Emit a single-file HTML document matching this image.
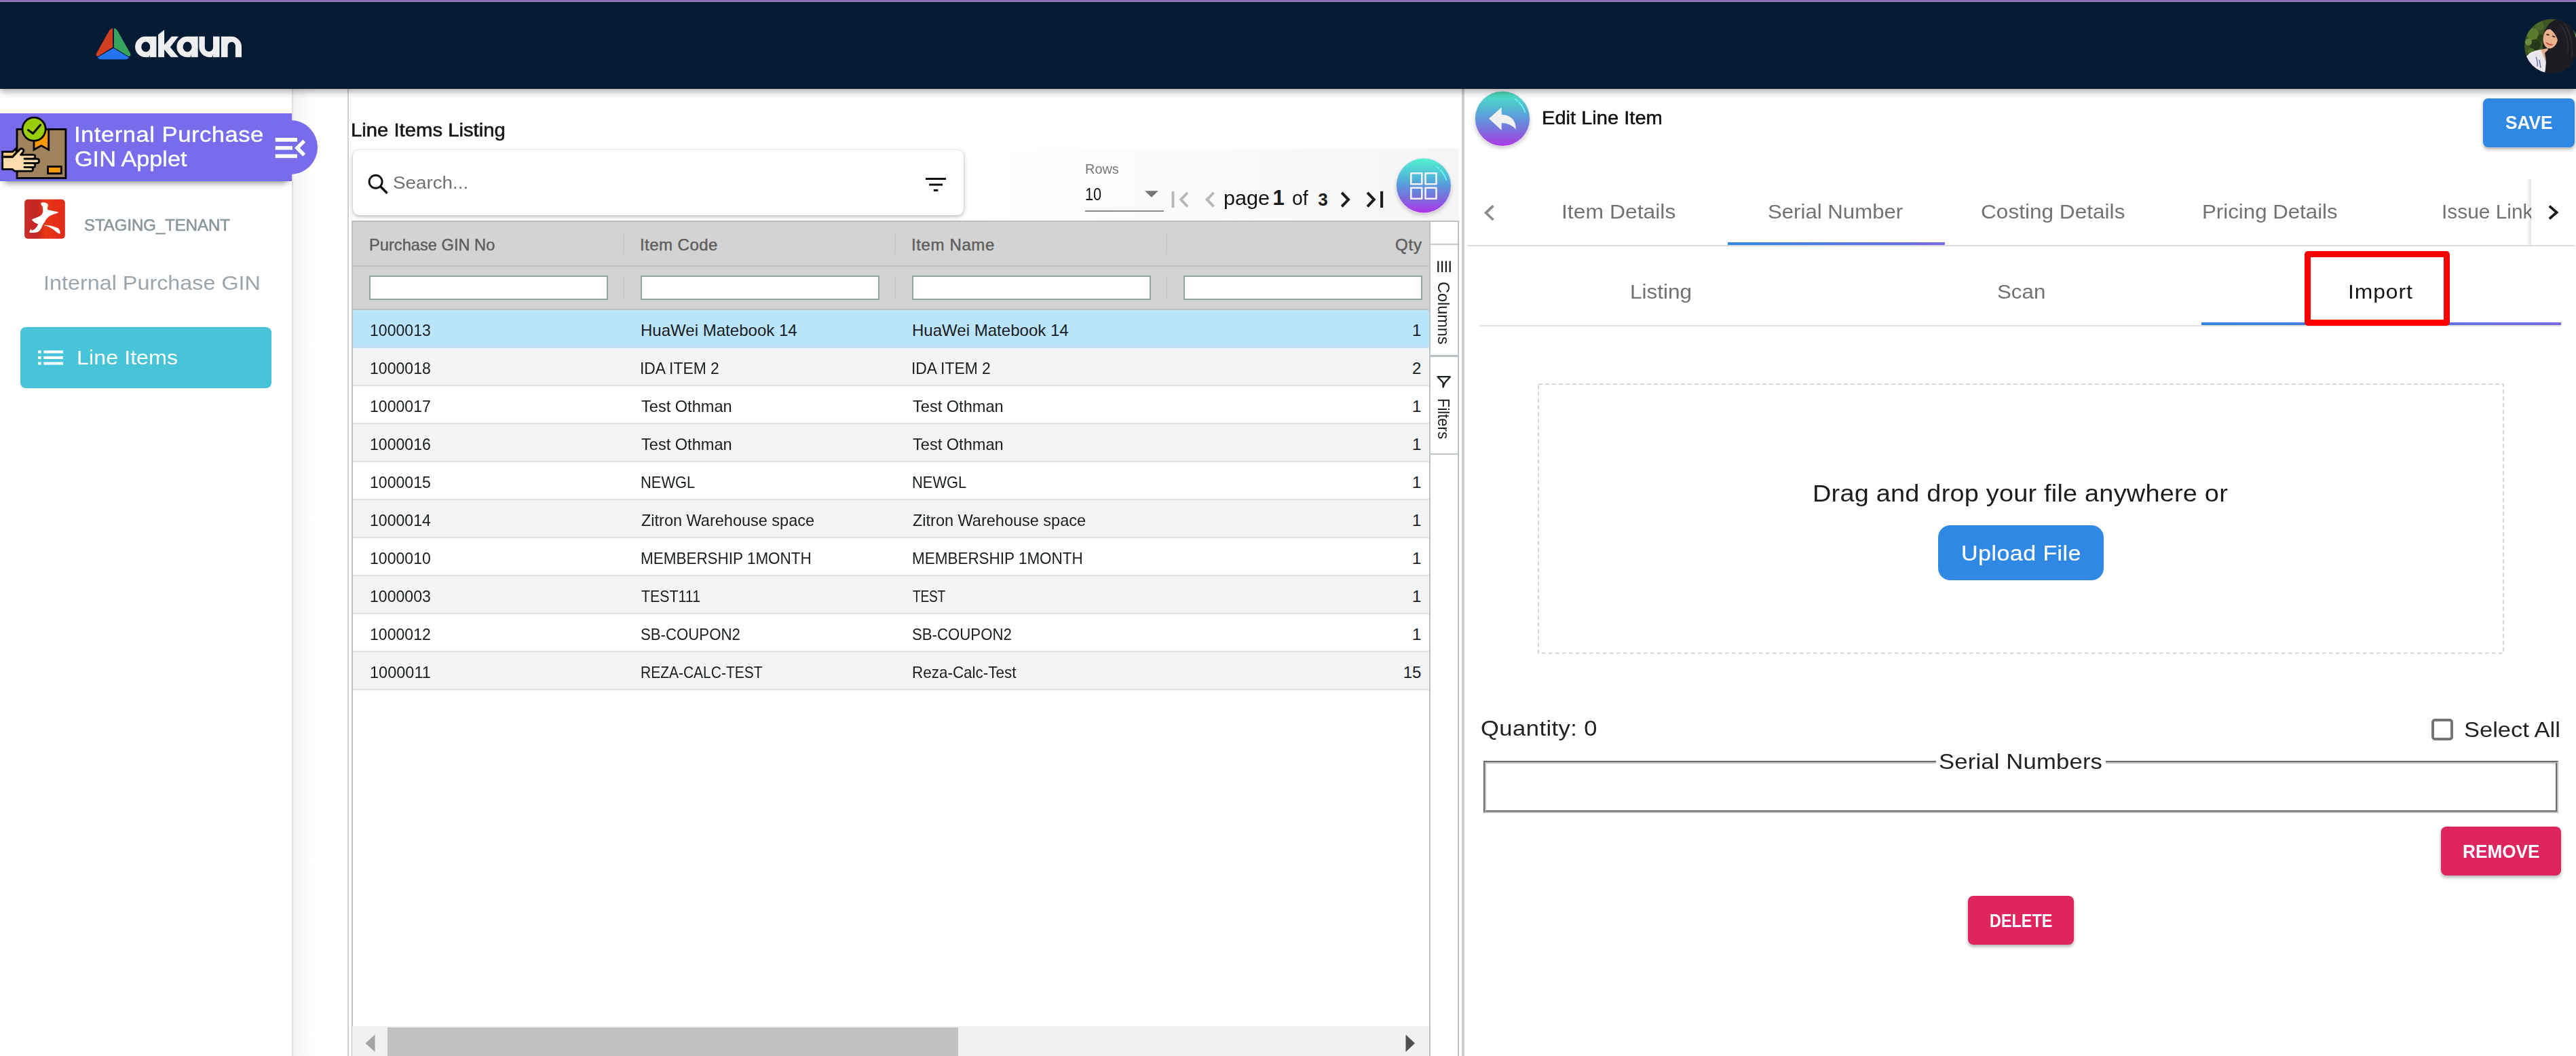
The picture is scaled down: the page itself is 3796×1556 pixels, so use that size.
<!DOCTYPE html>
<html><head><meta charset="utf-8"><title>akaun</title><style>
*{box-sizing:border-box;margin:0;padding:0}
html,body{width:3796px;height:1556px;overflow:hidden;background:#fff;font-family:"Liberation Sans",sans-serif}
.a{position:absolute}
.t{position:absolute;white-space:pre;font-family:"Liberation Sans",sans-serif}
</style></head><body>
<div class="a" style="left:0;top:0;width:3796px;height:3px;background:linear-gradient(#8c6fb8 0,#8c6fb8 66%,#9a78c2 67%);z-index:31"></div>
<div class="a" style="left:0;top:3px;width:3796px;height:128px;background:#051b34;box-shadow:0 4px 10px rgba(0,0,0,.35);z-index:30"></div>
<svg class="a" style="left:140px;top:40px;z-index:32" width="56" height="50" viewBox="0 0 56 50">
<path d="M26.1 1.8 V29.5 L4.6 43 Q0.6 43 2 38.8 L20.3 6.2 Q23 2 26.1 1.8 Z" fill="#d04020"/>
<path d="M28 1.8 Q31 2 33.7 6.2 L52 38.8 Q53.4 43 49.4 43 L28 30.1 Z" fill="#38a55e"/>
<path d="M27.1 31 L50 44.5 Q49 47.2 45.5 47.4 H8.5 Q5 47.2 3.7 44.5 Z" fill="#2775ee"/>
</svg>
<svg class="a" style="left:196px;top:40px;z-index:32" width="166" height="50" viewBox="0 0 166 50"><g fill="#efefef" fill-rule="evenodd">
<path d="M18.3 13.8 H34.5 V44.2 H18.3 A15.2 15.2 0 0 1 18.3 13.8 Z M18.8 21.5 A6.5 7.5 0 1 0 18.8 36.5 A6.5 7.5 0 1 0 18.8 21.5 Z"/>
<path d="M37.1 11 L46.1 4 V26 L56.9 13.8 H67 L54.8 29.4 L67 44.2 H55.8 L46.1 33 V44.2 H37.1 Z"/>
<path d="M79.6 13.8 H95.7 V44.2 H79.6 A15.2 15.2 0 0 1 79.6 13.8 Z M80.1 21.5 A6.5 7.5 0 1 0 80.1 36.5 A6.5 7.5 0 1 0 80.1 21.5 Z"/>
<path d="M97.4 13.8 H105.8 V30 A6.1 6.1 0 0 0 118 30 V13.8 H127.5 V44.2 H112.6 A15.2 15.2 0 0 1 97.4 29 Z"/>
<path d="M129.9 13.8 H144.8 A15.2 15.2 0 0 1 160 29 V44.2 H150.9 V27.4 A5.65 5.65 0 0 0 139.6 27.4 V44.2 H129.9 Z"/>
</g><g fill="#051b34"><path d="M24.7 44.4 V41.2 L22.9 44.4 Z"/><path d="M85.9 44.4 V41.2 L84.1 44.4 Z"/><path d="M118 44.4 V41.2 L116.2 44.4 Z"/></g></svg>
<svg class="a" style="left:3720px;top:28px;z-index:32" width="76" height="80" viewBox="0 0 76 80">
<defs><clipPath id="av"><circle cx="40" cy="40" r="40"/></clipPath><filter id="avb" x="-10%" y="-10%" width="120%" height="120%"><feGaussianBlur stdDeviation="0.7"/></filter></defs>
<g clip-path="url(#av)"><g filter="url(#avb)">
<rect x="-4" y="-4" width="88" height="88" fill="#3c5523"/>
<circle cx="12" cy="22" r="9" fill="#5a7a2e"/><circle cx="22" cy="10" r="7" fill="#4d6b2a"/><circle cx="16" cy="38" r="8" fill="#27391a"/><circle cx="6" cy="34" r="5" fill="#6b8c3c"/><circle cx="24" cy="28" r="5" fill="#2b4019"/><circle cx="10" cy="48" r="5" fill="#4a6a28"/>
<circle cx="72" cy="16" r="7" fill="#6f9740"/><circle cx="76" cy="26" r="5" fill="#83ac52"/>
<path d="M27 34 Q28 8 46 1 Q62 0 70 12 Q78 26 78 48 L80 84 L26 84 Q32 64 27 50 Z" fill="#1d1e22"/>
<path d="M3 55 Q9 47 24 45 L33 45 L31 84 L12 84 Q5 70 3 55Z" fill="#ebe7ef"/>
<path d="M24 45 L35 43 L31 62 Z" fill="#e2ad8c"/>
<path d="M17 56 Q20 62 19 70 M22 60 L24 72" stroke="#5a6aa0" stroke-width="1.4" fill="none"/>
<ellipse cx="38.5" cy="28" rx="10.8" ry="15.6" fill="#e8b18c" transform="rotate(10 38.5 28)"/>
<path d="M28 20 Q34 8 48 10 Q52 20 50 34 Q46 20 38 15 Q32 15 28 20Z" fill="#1d1e22"/>
<path d="M32.5 22.6 L36.5 23.6 M41 25 L45 26.4" stroke="#2a1c18" stroke-width="1.6" fill="none"/>
<path d="M31.5 34.5 Q35.5 39.5 41.5 38 Q36 37.6 31.5 34.5Z" fill="#c8434c" stroke="#c8434c" stroke-width="1"/>
<path d="M30 50 Q40 40 53 44 Q64 60 58 84 L29 84 Q34 66 30 50Z" fill="#1d1e22"/>
<path d="M52 8 Q66 22 64 50 M58 6 Q72 24 70 56" stroke="#33343a" stroke-width="1.2" fill="none"/>
</g></g></svg>
<div class="a" style="left:0;top:131px;width:432px;height:1425px;background:#fff;border-right:2px solid #e0e0e0"></div>
<div class="a" style="left:432px;top:131px;width:30px;height:1425px;background:linear-gradient(90deg,#f3f3f3,#fff)"></div>
<div class="a" style="left:388px;top:176.8px;width:80px;height:80px;border-radius:40px;background:#796cec;z-index:6"></div>
<div class="a" style="left:0;top:167px;width:430px;height:100px;background:#796cec;box-shadow:0 9px 9px -7px rgba(0,0,0,.5);z-index:5"></div>
<span class="t" style="left:109.4px;top:183.0px;font-size:31.5px;line-height:31.5px;font-weight:400;color:#fff;letter-spacing:0.44px;transform:scaleX(1.1000);transform-origin:0 0;-webkit-text-stroke:0.35px #fff;z-index:7">Internal Purchase</span>
<span class="t" style="left:109.9px;top:219.1px;font-size:31.5px;line-height:31.5px;font-weight:400;color:#fff;transform:scaleX(1.0866);transform-origin:0 0;-webkit-text-stroke:0.35px #fff;z-index:7">GIN Applet</span>
<svg class="a" style="left:400px;top:196px;z-index:8" width="56" height="44" viewBox="0 0 56 44" fill="none" stroke="#fff">
<path d="M5.75 9.9H38M5.75 22H31M5.75 34.05H38" stroke-width="5.6"/><path d="M48.3 11.6 L37.9 22 L48.3 32.5" stroke-width="5.4"/></svg>
<span class="t" style="left:123.5px;top:319.8px;font-size:24px;line-height:24px;font-weight:400;color:#8a969c;transform:scaleX(0.9971);transform-origin:0 0;-webkit-text-stroke:0.6px #8a969c;">STAGING_TENANT</span>
<span class="t" style="left:64.4px;top:401.9px;font-size:30px;line-height:30px;font-weight:400;color:#9ba5ab;transform:scaleX(1.0780);transform-origin:0 0;">Internal Purchase GIN</span>
<div class="a" style="left:30px;top:482px;width:370px;height:90px;border-radius:8px;background:#48c4d9"></div>
<svg class="a" style="left:55px;top:515px" width="40" height="24" viewBox="0 0 40 24" fill="#fff">
<rect x="1" y="1.5" width="4.5" height="4"/><rect x="9.5" y="1.5" width="28.5" height="4"/>
<rect x="1" y="10" width="4.5" height="4"/><rect x="9.5" y="10" width="28.5" height="4"/>
<rect x="1" y="18.5" width="4.5" height="4"/><rect x="9.5" y="18.5" width="28.5" height="4"/></svg>
<span class="t" style="left:112.8px;top:511.8px;font-size:30px;line-height:30px;font-weight:400;color:#fff;transform:scaleX(1.0783);transform-origin:0 0;">Line Items</span>
<div class="a" style="left:512px;top:131px;width:2px;height:1425px;background:#d0d0d0"></div>
<span class="t" style="left:517.3px;top:179.1px;font-size:27px;line-height:27px;font-weight:400;color:#151515;transform:scaleX(1.0841);transform-origin:0 0;-webkit-text-stroke:0.55px #151515;">Line Items Listing</span>
<div class="a" style="left:1430px;top:219px;width:720px;height:106px;background:linear-gradient(90deg,#fff 0,#f5f5f5 100%)"></div>
<div class="a" style="left:519.5px;top:221px;width:900px;height:95.5px;border-radius:9px;background:#fff;box-shadow:0 2px 6px rgba(0,0,0,.28),0 0 2px rgba(0,0,0,.12)"></div>
<svg class="a" style="left:540px;top:255px" width="36" height="36" viewBox="0 0 36 36" fill="none" stroke="#111" stroke-width="2.9"><circle cx="13.6" cy="12.7" r="9.5"/><path d="M20.4 19.6 L30.6 29.7" stroke-width="3.5"/></svg>
<span class="t" style="left:578.5px;top:256.4px;font-size:26.5px;line-height:26.5px;font-weight:400;color:#707070;transform:scaleX(1.0488);transform-origin:0 0;">Search...</span>
<svg class="a" style="left:1362px;top:258px" width="36" height="28" viewBox="0 0 36 28" fill="#111"><rect x="2" y="4" width="30" height="3"/><rect x="7.1" y="12.6" width="19.9" height="3"/><rect x="13.8" y="20.9" width="6.5" height="3.1"/></svg>
<span class="t" style="left:1598.9px;top:238.9px;font-size:20px;line-height:20px;font-weight:400;color:#777;transform:scaleX(0.9957);transform-origin:0 0;">Rows</span>
<span class="t" style="left:1598.6px;top:272.7px;font-size:26.5px;line-height:26.5px;font-weight:400;color:#111;transform:scaleX(0.8191);transform-origin:0 0;">10</span>
<svg class="a" style="left:1686px;top:280px" width="22" height="12" viewBox="0 0 22 12"><path d="M1 1.2 H20.8 L10.9 10.8 Z" fill="#757575"/></svg>
<div class="a" style="left:1599px;top:310px;width:116px;height:2px;background:#8a8a8a"></div>
<svg class="a" style="left:1720px;top:276px" width="330" height="36" viewBox="0 0 330 36" fill="none" stroke-width="4">
<path d="M8.5 6.1V30" stroke="#b8b8b8" stroke-width="3.9"/><path d="M30 7.9 L20.2 18.1 L30 28.3" stroke="#b8b8b8"/>
<path d="M68.5 7.9 L58.7 18.1 L68.5 28.3" stroke="#b8b8b8"/>
<path d="M257.2 7.9 L267 18.1 L257.2 28.3" stroke="#1c1c1c"/>
<path d="M295 7.9 L304.8 18.1 L295 28.3" stroke="#1c1c1c"/><path d="M316.1 5.8V30" stroke="#1c1c1c" stroke-width="4.1"/>
</svg>
<span class="t" style="left:1803.1px;top:277.1px;font-size:30px;line-height:30px;font-weight:400;color:#111;transform:scaleX(1.0207);transform-origin:0 0;">page</span>
<span class="t" style="left:1875.5px;top:276.3px;font-size:31px;line-height:31px;font-weight:700;color:#1c1c1c;">1</span>
<span class="t" style="left:1903.6px;top:277.1px;font-size:30px;line-height:30px;font-weight:400;color:#111;transform:scaleX(0.9439);transform-origin:0 0;">of</span>
<span class="t" style="left:1942.3px;top:280.7px;font-size:26px;line-height:26px;font-weight:700;color:#1c1c1c;">3</span>
<svg class="a" style="left:2050px;top:226px" width="96" height="100" viewBox="0 0 96 100">
<defs><linearGradient id="gb" x1="0" y1="0" x2="0" y2="1"><stop offset="0" stop-color="#52f2d0"/><stop offset=".3" stop-color="#50c2d8"/><stop offset=".5" stop-color="#5a98dc"/><stop offset=".72" stop-color="#7a6edc"/><stop offset="1" stop-color="#ac36e6"/></linearGradient>
<filter id="sh" x="-30%" y="-30%" width="160%" height="170%"><feGaussianBlur stdDeviation="3"/></filter></defs>
<ellipse cx="48" cy="51.5" rx="39.5" ry="38.5" fill="rgba(0,0,0,.26)" filter="url(#sh)"/>
<circle cx="47.9" cy="47.5" r="41" fill="#ece2f2"/><circle cx="47.9" cy="47.5" r="40.1" fill="url(#gb)"/>
<path d="M67 19.6 L70.4 22.4 M72.6 24.6 Q78.6 31 81.6 39.2" stroke="#74f2ee" stroke-width="1.7" fill="none" stroke-linecap="round"/>
<g fill="none" stroke="#f5f3f7" stroke-width="2.6" stroke-linejoin="round"><rect x="29.3" y="29.3" width="16" height="16"/><rect x="50.5" y="29.3" width="16" height="16"/><rect x="29.3" y="50.7" width="16" height="16"/><rect x="50.5" y="50.7" width="16" height="16"/></g>
</svg>
<div class="a" style="left:518px;top:325px;width:1589px;height:132px;background:#d3d3d3;border-top:2px solid #b9c0c4"></div>
<div class="a" style="left:518px;top:391px;width:1589px;height:2px;background:#bcc3c7"></div>
<div class="a" style="left:518px;top:455px;width:1589px;height:2px;background:#bcc3c7"></div>
<div class="a" style="left:518px;top:325px;width:2px;height:1231px;background:#bcc3c7"></div>
<div class="a" style="left:2106px;top:325px;width:2px;height:1231px;background:#bcc3c7"></div>
<div class="a" style="left:918px;top:343px;width:2px;height:32px;background:#c4c9cc"></div>
<div class="a" style="left:918px;top:408px;width:2px;height:32px;background:#c4c9cc"></div>
<div class="a" style="left:1318px;top:343px;width:2px;height:32px;background:#c4c9cc"></div>
<div class="a" style="left:1318px;top:408px;width:2px;height:32px;background:#c4c9cc"></div>
<div class="a" style="left:1718px;top:343px;width:2px;height:32px;background:#c4c9cc"></div>
<div class="a" style="left:1718px;top:408px;width:2px;height:32px;background:#c4c9cc"></div>
<span class="t" style="left:544.0px;top:349.1px;font-size:24px;line-height:24px;font-weight:400;color:#5f5f5f;transform:scaleX(0.9854);transform-origin:0 0;-webkit-text-stroke:0.5px #5f5f5f;">Purchase GIN No</span>
<span class="t" style="left:943.0px;top:349.1px;font-size:24px;line-height:24px;font-weight:400;color:#5f5f5f;letter-spacing:0.45px;-webkit-text-stroke:0.5px #5f5f5f;">Item Code</span>
<span class="t" style="left:1343.0px;top:349.1px;font-size:24px;line-height:24px;font-weight:400;color:#5f5f5f;letter-spacing:0.62px;-webkit-text-stroke:0.5px #5f5f5f;">Item Name</span>
<span class="t" style="left:2056.0px;top:349.1px;font-size:24px;line-height:24px;font-weight:400;color:#5f5f5f;letter-spacing:0.83px;-webkit-text-stroke:0.5px #5f5f5f;">Qty</span>
<div class="a" style="left:544px;top:406px;width:352px;height:36px;background:#fff;border:2px solid #95a5a6"></div>
<div class="a" style="left:944px;top:406px;width:352px;height:36px;background:#fff;border:2px solid #95a5a6"></div>
<div class="a" style="left:1344px;top:406px;width:352px;height:36px;background:#fff;border:2px solid #95a5a6"></div>
<div class="a" style="left:1744px;top:406px;width:352px;height:36px;background:#fff;border:2px solid #95a5a6"></div>
<div class="a" style="left:520px;top:457px;width:1586px;height:56px;background:#bbe4fd;border-bottom:2px solid #c9dfee"></div>
<span class="t" style="left:544.5px;top:474.5px;font-size:24px;line-height:24px;font-weight:400;color:#181d1f;transform:scaleX(0.9611);transform-origin:0 0;">1000013</span>
<span class="t" style="left:944.0px;top:474.5px;font-size:24px;line-height:24px;font-weight:400;color:#181d1f;letter-spacing:0.02px;">HuaWei Matebook 14</span>
<span class="t" style="left:1344.0px;top:474.5px;font-size:24px;line-height:24px;font-weight:400;color:#181d1f;letter-spacing:0.02px;">HuaWei Matebook 14</span>
<span class="t" style="left:2081.0px;top:474.5px;font-size:24px;line-height:24px;font-weight:400;color:#181d1f;">1</span>
<div class="a" style="left:520px;top:513px;width:1586px;height:56px;background:#f4f4f4;border-bottom:2px solid #dde2e6"></div>
<span class="t" style="left:544.5px;top:530.5px;font-size:24px;line-height:24px;font-weight:400;color:#181d1f;transform:scaleX(0.9611);transform-origin:0 0;">1000018</span>
<span class="t" style="left:943.1px;top:530.5px;font-size:24px;line-height:24px;font-weight:400;color:#181d1f;transform:scaleX(0.9509);transform-origin:0 0;">IDA ITEM 2</span>
<span class="t" style="left:1343.1px;top:530.5px;font-size:24px;line-height:24px;font-weight:400;color:#181d1f;transform:scaleX(0.9509);transform-origin:0 0;">IDA ITEM 2</span>
<span class="t" style="left:2081.0px;top:530.5px;font-size:24px;line-height:24px;font-weight:400;color:#181d1f;">2</span>
<div class="a" style="left:520px;top:569px;width:1586px;height:56px;background:#fff;border-bottom:2px solid #dde2e6"></div>
<span class="t" style="left:544.5px;top:586.5px;font-size:24px;line-height:24px;font-weight:400;color:#181d1f;transform:scaleX(0.9611);transform-origin:0 0;">1000017</span>
<span class="t" style="left:945.0px;top:586.5px;font-size:24px;line-height:24px;font-weight:400;color:#181d1f;transform:scaleX(0.9821);transform-origin:0 0;">Test Othman</span>
<span class="t" style="left:1345.0px;top:586.5px;font-size:24px;line-height:24px;font-weight:400;color:#181d1f;transform:scaleX(0.9821);transform-origin:0 0;">Test Othman</span>
<span class="t" style="left:2081.0px;top:586.5px;font-size:24px;line-height:24px;font-weight:400;color:#181d1f;">1</span>
<div class="a" style="left:520px;top:625px;width:1586px;height:56px;background:#f4f4f4;border-bottom:2px solid #dde2e6"></div>
<span class="t" style="left:544.5px;top:642.5px;font-size:24px;line-height:24px;font-weight:400;color:#181d1f;transform:scaleX(0.9611);transform-origin:0 0;">1000016</span>
<span class="t" style="left:945.0px;top:642.5px;font-size:24px;line-height:24px;font-weight:400;color:#181d1f;transform:scaleX(0.9821);transform-origin:0 0;">Test Othman</span>
<span class="t" style="left:1345.0px;top:642.5px;font-size:24px;line-height:24px;font-weight:400;color:#181d1f;transform:scaleX(0.9821);transform-origin:0 0;">Test Othman</span>
<span class="t" style="left:2081.0px;top:642.5px;font-size:24px;line-height:24px;font-weight:400;color:#181d1f;">1</span>
<div class="a" style="left:520px;top:681px;width:1586px;height:56px;background:#fff;border-bottom:2px solid #dde2e6"></div>
<span class="t" style="left:544.5px;top:698.5px;font-size:24px;line-height:24px;font-weight:400;color:#181d1f;transform:scaleX(0.9611);transform-origin:0 0;">1000015</span>
<span class="t" style="left:944.1px;top:698.5px;font-size:24px;line-height:24px;font-weight:400;color:#181d1f;transform:scaleX(0.9116);transform-origin:0 0;">NEWGL</span>
<span class="t" style="left:1344.1px;top:698.5px;font-size:24px;line-height:24px;font-weight:400;color:#181d1f;transform:scaleX(0.9116);transform-origin:0 0;">NEWGL</span>
<span class="t" style="left:2081.0px;top:698.5px;font-size:24px;line-height:24px;font-weight:400;color:#181d1f;">1</span>
<div class="a" style="left:520px;top:737px;width:1586px;height:56px;background:#f4f4f4;border-bottom:2px solid #dde2e6"></div>
<span class="t" style="left:544.5px;top:754.5px;font-size:24px;line-height:24px;font-weight:400;color:#181d1f;transform:scaleX(0.9611);transform-origin:0 0;">1000014</span>
<span class="t" style="left:945.0px;top:754.5px;font-size:24px;line-height:24px;font-weight:400;color:#181d1f;transform:scaleX(0.9788);transform-origin:0 0;">Zitron Warehouse space</span>
<span class="t" style="left:1345.0px;top:754.5px;font-size:24px;line-height:24px;font-weight:400;color:#181d1f;transform:scaleX(0.9788);transform-origin:0 0;">Zitron Warehouse space</span>
<span class="t" style="left:2081.0px;top:754.5px;font-size:24px;line-height:24px;font-weight:400;color:#181d1f;">1</span>
<div class="a" style="left:520px;top:793px;width:1586px;height:56px;background:#fff;border-bottom:2px solid #dde2e6"></div>
<span class="t" style="left:544.5px;top:810.5px;font-size:24px;line-height:24px;font-weight:400;color:#181d1f;transform:scaleX(0.9611);transform-origin:0 0;">1000010</span>
<span class="t" style="left:944.1px;top:810.5px;font-size:24px;line-height:24px;font-weight:400;color:#181d1f;transform:scaleX(0.9362);transform-origin:0 0;">MEMBERSHIP 1MONTH</span>
<span class="t" style="left:1344.1px;top:810.5px;font-size:24px;line-height:24px;font-weight:400;color:#181d1f;transform:scaleX(0.9362);transform-origin:0 0;">MEMBERSHIP 1MONTH</span>
<span class="t" style="left:2081.0px;top:810.5px;font-size:24px;line-height:24px;font-weight:400;color:#181d1f;">1</span>
<div class="a" style="left:520px;top:849px;width:1586px;height:56px;background:#f4f4f4;border-bottom:2px solid #dde2e6"></div>
<span class="t" style="left:544.5px;top:866.5px;font-size:24px;line-height:24px;font-weight:400;color:#181d1f;transform:scaleX(0.9611);transform-origin:0 0;">1000003</span>
<span class="t" style="left:945.0px;top:866.5px;font-size:24px;line-height:24px;font-weight:400;color:#181d1f;transform:scaleX(0.8895);transform-origin:0 0;">TEST111</span>
<span class="t" style="left:1345.0px;top:866.5px;font-size:24px;line-height:24px;font-weight:400;color:#181d1f;letter-spacing:-0.35px;transform:scaleX(0.8000);transform-origin:0 0;">TEST</span>
<span class="t" style="left:2081.0px;top:866.5px;font-size:24px;line-height:24px;font-weight:400;color:#181d1f;">1</span>
<div class="a" style="left:520px;top:905px;width:1586px;height:56px;background:#fff;border-bottom:2px solid #dde2e6"></div>
<span class="t" style="left:544.5px;top:922.5px;font-size:24px;line-height:24px;font-weight:400;color:#181d1f;transform:scaleX(0.9611);transform-origin:0 0;">1000012</span>
<span class="t" style="left:944.1px;top:922.5px;font-size:24px;line-height:24px;font-weight:400;color:#181d1f;transform:scaleX(0.9253);transform-origin:0 0;">SB-COUPON2</span>
<span class="t" style="left:1344.1px;top:922.5px;font-size:24px;line-height:24px;font-weight:400;color:#181d1f;transform:scaleX(0.9253);transform-origin:0 0;">SB-COUPON2</span>
<span class="t" style="left:2081.0px;top:922.5px;font-size:24px;line-height:24px;font-weight:400;color:#181d1f;">1</span>
<div class="a" style="left:520px;top:961px;width:1586px;height:56px;background:#f4f4f4;border-bottom:2px solid #dde2e6"></div>
<span class="t" style="left:544.5px;top:978.5px;font-size:24px;line-height:24px;font-weight:400;color:#181d1f;transform:scaleX(0.9800);transform-origin:0 0;">1000011</span>
<span class="t" style="left:944.1px;top:978.5px;font-size:24px;line-height:24px;font-weight:400;color:#181d1f;transform:scaleX(0.8745);transform-origin:0 0;">REZA-CALC-TEST</span>
<span class="t" style="left:1344.1px;top:978.5px;font-size:24px;line-height:24px;font-weight:400;color:#181d1f;transform:scaleX(0.9353);transform-origin:0 0;">Reza-Calc-Test</span>
<span class="t" style="left:2067.7px;top:978.5px;font-size:24px;line-height:24px;font-weight:400;color:#181d1f;">15</span>
<div class="a" style="left:519px;top:1512px;width:1587px;height:44px;background:#f1f1f1"></div>
<div class="a" style="left:571px;top:1514px;width:841px;height:42px;background:#c1c1c1"></div>
<svg class="a" style="left:534px;top:1522px" width="22" height="30" viewBox="0 0 22 30"><path d="M18.5 2.5 V28 L4.5 15.2 Z" fill="#a3a3a3"/></svg>
<svg class="a" style="left:2066px;top:1522px" width="22" height="30" viewBox="0 0 22 30"><path d="M5.5 2.5 V28 L19 15.2 Z" fill="#505050"/></svg>
<div class="a" style="left:2108px;top:326px;width:42px;height:1230px;background:#fff;border-right:2px solid #bcc3c7"></div>
<div class="a" style="left:2108px;top:325px;width:42px;height:2px;background:#bcc3c7"></div>
<div class="a" style="left:2108px;top:359px;width:40px;height:2px;background:#c4c9cc"></div>
<div class="a" style="left:2108px;top:523px;width:40px;height:3px;background:#b9c0c4"></div>
<div class="a" style="left:2108px;top:668px;width:40px;height:2px;background:#c4c9cc"></div>
<svg class="a" style="left:2116px;top:383px" width="24" height="20" viewBox="0 0 24 20" fill="#181d1f"><rect x="2.2" y="1.6" width="2.2" height="16.4"/><rect x="8" y="1.6" width="2.2" height="16.4"/><rect x="13.8" y="1.6" width="2.2" height="16.4"/><rect x="19.6" y="1.6" width="2.2" height="16.4"/></svg>
<div class="a" style="left:2118.5px;top:414.5px;transform:rotate(90deg);transform-origin:0 0;width:0;height:0"><span class="t" style="left:-0.5px;top:-20.3px;font-size:24px;line-height:24px;font-weight:400;color:#181d1f;transform:scaleX(0.9765);transform-origin:0 0;">Columns</span></div>
<svg class="a" style="left:2116px;top:551.5px" width="24" height="22" viewBox="0 0 24 22" fill="none" stroke="#181d1f" stroke-width="2.2" stroke-linejoin="round"><path d="M21 3.2 L2.6 3.2 L10.5 11.8 V18.6 L13.2 11.8 Z"/></svg>
<div class="a" style="left:2118.5px;top:586.5px;transform:rotate(90deg);transform-origin:0 0;width:0;height:0"><span class="t" style="left:-0.4px;top:-20.3px;font-size:24px;line-height:24px;font-weight:400;color:#181d1f;transform:scaleX(0.9171);transform-origin:0 0;">Filters</span></div>
<div class="a" style="left:2154px;top:131px;width:4px;height:1425px;background:#cfcfcf"></div>
<svg class="a" style="left:2164px;top:126px" width="100" height="104" viewBox="0 0 100 104">
<defs><linearGradient id="gb2" x1="0" y1="0" x2="0" y2="1"><stop offset="0" stop-color="#48d8b6"/><stop offset=".15" stop-color="#4fd2cc"/><stop offset=".4" stop-color="#56a8d8"/><stop offset=".6" stop-color="#6c84dc"/><stop offset=".8" stop-color="#8a5ee0"/><stop offset="1" stop-color="#aa3ae6"/></linearGradient>
<filter id="sh2" x="-30%" y="-30%" width="160%" height="170%"><feGaussianBlur stdDeviation="3"/></filter></defs>
<ellipse cx="50" cy="53" rx="40" ry="39" fill="rgba(0,0,0,.24)" filter="url(#sh2)"/>
<circle cx="50" cy="48.9" r="41" fill="#ece2f2"/><circle cx="50" cy="48.9" r="40.1" fill="url(#gb2)"/>
<path d="M69 19.8 L72.4 22.6 M74.6 24.8 Q80.6 31.2 83.4 39.4" stroke="#74f2ee" stroke-width="1.7" fill="none" stroke-linecap="round"/>
<path d="M48.7 32.3 L30.1 48.75 L48.7 65.9 V55.2 Q62 55.2 69.8 64.7 Q69.5 44 48.7 42.8 Z" fill="#f1f1f1"/>
</svg>
<span class="t" style="left:2271.9px;top:160.0px;font-size:27.5px;line-height:27.5px;font-weight:400;color:#111;transform:scaleX(1.0573);transform-origin:0 0;-webkit-text-stroke:0.5px #111;">Edit Line Item</span>
<div class="a" style="left:3659px;top:145px;width:135px;height:72px;border-radius:7.5px;background:#2f88e4;box-shadow:0 3px 5px rgba(0,0,0,.3)"></div>
<span class="t" style="left:3691.6px;top:166.6px;font-size:28px;line-height:28px;font-weight:700;color:#fff;transform:scaleX(0.9389);transform-origin:0 0;">SAVE</span>
<div class="a" style="left:2162px;top:361px;width:1632px;height:2px;background:#dcdcdc"></div>
<div class="a" style="left:2546px;top:357px;width:320px;height:4px;background:linear-gradient(90deg,#2f88e4,#7569e8)"></div>
<svg class="a" style="left:2180px;top:296px" width="30" height="36" viewBox="0 0 30 36" fill="none" stroke="#8c8c8c" stroke-width="3.8"><path d="M20.5 7.2 L9.6 17.6 L20.5 28"/></svg>
<span class="t" style="left:2300.5px;top:297.9px;font-size:29px;line-height:29px;font-weight:400;color:#727272;transform:scaleX(1.1000);transform-origin:0 0;">Item Details</span>
<span class="t" style="left:2605.0px;top:297.9px;font-size:29px;line-height:29px;font-weight:400;color:#727272;transform:scaleX(1.0748);transform-origin:0 0;">Serial Number</span>
<span class="t" style="left:2918.8px;top:297.9px;font-size:29px;line-height:29px;font-weight:400;color:#727272;transform:scaleX(1.0892);transform-origin:0 0;">Costing Details</span>
<span class="t" style="left:3244.8px;top:297.9px;font-size:29px;line-height:29px;font-weight:400;color:#727272;transform:scaleX(1.0774);transform-origin:0 0;">Pricing Details</span>
<span class="t" style="left:3598.2px;top:297.9px;font-size:29px;line-height:29px;font-weight:400;color:#727272;transform:scaleX(1.0304);transform-origin:0 0;">Issue Link</span>
<div class="a" style="left:3729.5px;top:264px;width:66.5px;height:97px;background:#fff"></div>
<div class="a" style="left:3722.5px;top:264px;width:7px;height:97px;background:linear-gradient(90deg,rgba(0,0,0,0),rgba(0,0,0,.11))"></div>
<svg class="a" style="left:3748px;top:296px" width="30" height="36" viewBox="0 0 30 36" fill="none" stroke="#1a1a1a" stroke-width="3.8"><path d="M8.8 7.6 L19.6 17 L8.8 26.4"/></svg>
<div class="a" style="left:2181px;top:478.5px;width:1593px;height:2px;background:#e0e0e0"></div>
<div class="a" style="left:3243.5px;top:475px;width:530.5px;height:4.3px;background:linear-gradient(90deg,#2f88e4,#7569e8)"></div>
<span class="t" style="left:2401.6px;top:415.8px;font-size:29px;line-height:29px;font-weight:400;color:#727272;transform:scaleX(1.0867);transform-origin:0 0;">Listing</span>
<span class="t" style="left:2942.6px;top:415.8px;font-size:29px;line-height:29px;font-weight:400;color:#727272;transform:scaleX(1.0786);transform-origin:0 0;">Scan</span>
<span class="t" style="left:3460.3px;top:415.8px;font-size:29px;line-height:29px;font-weight:400;color:#151515;letter-spacing:0.79px;transform:scaleX(1.1000);transform-origin:0 0;">Import</span>
<div class="a" style="left:3396px;top:370px;width:213.8px;height:109.8px;border:9px solid #fb0000;border-radius:5px"></div>
<svg class="a" style="left:2264px;top:563px" width="1430" height="404" viewBox="0 0 1430 404"><rect x="3" y="3" width="1422" height="396.6" fill="none" stroke="#d6d6d6" stroke-width="2" stroke-dasharray="6 4"/></svg>
<span class="t" style="left:2671.4px;top:710.1px;font-size:34.5px;line-height:34.5px;font-weight:400;color:#1c1c1c;letter-spacing:0.17px;transform:scaleX(1.1000);transform-origin:0 0;">Drag and drop your file anywhere or</span>
<div class="a" style="left:2856.3px;top:774px;width:244px;height:80.5px;border-radius:18px;background:#2f88e4"></div>
<span class="t" style="left:2889.9px;top:799.6px;font-size:31px;line-height:31px;font-weight:400;color:#fff;letter-spacing:0.37px;transform:scaleX(1.1000);transform-origin:0 0;-webkit-text-stroke:0.2px #fff;">Upload File</span>
<span class="t" style="left:2181.7px;top:1057.6px;font-size:31.5px;line-height:31.5px;font-weight:400;color:#222;letter-spacing:0.37px;transform:scaleX(1.1000);transform-origin:0 0;">Quantity: 0</span>
<div class="a" style="left:3583.2px;top:1059px;width:31.8px;height:32px;border:4px solid #757575;border-radius:5px;background:#fff"></div>
<span class="t" style="left:3630.7px;top:1059.9px;font-size:31.5px;line-height:31.5px;font-weight:400;color:#222;transform:scaleX(1.0950);transform-origin:0 0;">Select All</span>
<div class="a" style="left:2185.8px;top:1121px;width:1584px;height:76.8px;border:4px groove rgb(192,192,192)"></div>
<div class="a" style="left:2852.7px;top:1110px;width:250.6px;height:24px;background:#fff"></div>
<span class="t" style="left:2857.3px;top:1107.2px;font-size:31.5px;line-height:31.5px;font-weight:400;color:#222;letter-spacing:0.15px;transform:scaleX(1.1000);transform-origin:0 0;">Serial Numbers</span>
<div class="a" style="left:3597px;top:1218px;width:177px;height:72px;border-radius:8px;background:#df2560;box-shadow:0 3px 5px rgba(0,0,0,.3)"></div>
<span class="t" style="left:3628.7px;top:1239.9px;font-size:28.5px;line-height:28.5px;font-weight:700;color:#fff;transform:scaleX(0.9193);transform-origin:0 0;">REMOVE</span>
<div class="a" style="left:2900px;top:1320px;width:156px;height:72px;border-radius:8px;background:#df2560;box-shadow:0 3px 5px rgba(0,0,0,.3)"></div>
<span class="t" style="left:2931.8px;top:1341.9px;font-size:28.5px;line-height:28.5px;font-weight:700;color:#fff;transform:scaleX(0.8214);transform-origin:0 0;">DELETE</span>
<svg class="a" style="left:0;top:165px;z-index:7" width="104" height="104" viewBox="0 0 104 104" stroke="#000" stroke-width="2.8" stroke-linejoin="round" stroke-linecap="round">
<rect x="25" y="25.5" width="71.9" height="71.9" fill="#a0825c" stroke-linejoin="miter"/>
<path d="M50 38 V55.6 L60.9 49.6 L71.7 55.6 V26" fill="#f89a08" stroke-linejoin="miter"/>
<circle cx="50.1" cy="25.3" r="17.1" fill="#9acd0a"/>
<path d="M41.6 26.6 L48.6 31.8 L59.6 19" fill="none" stroke-width="3"/>
<rect x="70.6" y="80.5" width="19.7" height="10.1" fill="#f89a08" stroke-linejoin="miter"/>
<path d="M3.6 66 V84.4 H18.5 L21.5 87.2 H45.5 Q48.6 87.2 48.6 84.3 Q48.6 81.6 46 81.4 H49 Q51.8 81.2 51.8 78.4 Q51.8 75.6 49 75.4 H54.5 Q57.6 75.2 57.6 72.2 Q57.6 69.2 54.5 69 H49 Q51.8 68.8 51.8 66 Q51.8 63.2 49 63.2 H30.5 L34 59.2 Q36 56.4 33.6 54.6 Q31.2 53 29 55.4 L18.6 66 Z" fill="#fddcae"/>
<path d="M36 69 H49 M36 75.4 H49 M36 81.4 H46" fill="none"/>
<path d="M3.6 58.6 H18.6 L24 53.4 V59.6 L18.6 66 H3.6 Z" fill="#fcc97e" stroke-linejoin="miter"/>
</svg>
<svg class="a" style="left:26px;top:284px" width="80" height="80" viewBox="0 0 80 80">
<defs><linearGradient id="tg" x1="0" y1="0" x2="1" y2="0"><stop offset="0" stop-color="#c8302a"/><stop offset=".3" stop-color="#c32523"/><stop offset=".52" stop-color="#e63a18"/><stop offset=".8" stop-color="#e62e18"/><stop offset="1" stop-color="#e02a1a"/></linearGradient></defs>
<rect x="10.1" y="9.8" width="59.7" height="57.9" rx="5" fill="url(#tg)"/>
<path d="M34.8 14.4 Q39 13.6 42.4 15.2 Q45.4 16.6 44.7 19.5 Q43.6 22 43.9 25 Q52 27 60.6 28.4 Q57.5 30.6 53 31.8 Q48 33.2 45.5 35.6 Q42 38.6 40.2 42.4 Q38 45.5 36.4 48.5 Q35.4 52 33.3 54.5 Q31.6 57.2 28.8 58.3 Q23 59.6 17.4 58.7 Q17.2 56 19.7 53 Q20 54.6 21.2 55.7 Q23.6 54.8 25.8 53 Q28.6 50 30.3 46.2 Q27.4 45.4 25 43.9 Q22.6 42 20.8 39.4 Q23.6 38.2 26.5 37.1 Q30 36 33.3 34.1 Q36.4 32 37.1 28.8 Q37.6 25.5 37.1 22 Q36.6 19.4 34.5 17.4 Q34 15.8 34.8 14.4 Z" fill="#fff"/>
<path d="M39.4 47.7 Q46 47.4 52 49.6 Q57 51 59.8 52.3 Q63 55.5 62.9 60.6 Q60 60.4 58 58.6 Q55.5 56.4 53 54.5 Q49.5 52 45.5 50 Q42.4 48.6 39.4 48.6 Z" fill="#fff"/>
</svg>
</body></html>
